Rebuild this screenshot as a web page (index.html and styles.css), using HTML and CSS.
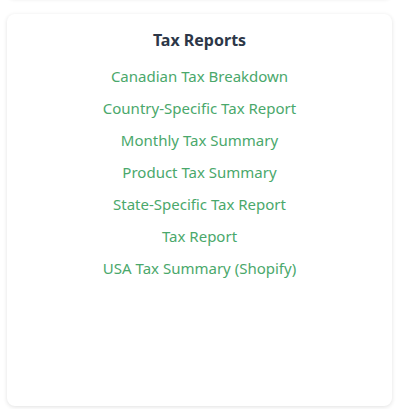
FILE: index.html
```html
<!doctype html>
<html>

<head>
	<title>Tax Reports</title>
	<link rel="stylesheet" href="styles.css">
</head>

<body>
	<div class="card card-prev"></div>
	<div class="card report-card">
		<div class="card-title">Tax Reports</div>
		<ul class="report-list">
			<li><a href="#">Canadian Tax Breakdown</a></li>
			<li><a href="#">Country-Specific Tax Report</a></li>
			<li><a href="#">Monthly Tax Summary</a></li>
			<li><a href="#">Product Tax Summary</a></li>
			<li><a href="#">State-Specific Tax Report</a></li>
			<li><a href="#">Tax Report</a></li>
			<li><a href="#">USA Tax Summary (Shopify)</a></li>
		</ul>
	</div>
</body>

</html>
```

FILE: styles.css
```css
* { margin: 0; padding: 0; box-sizing: border-box; }
body { background-color: #fff; font-family: 'Noto Sans', 'Open Sans', sans-serif; font-size: 16px; padding: 0 8px 0 7px; display: flex; flex-direction: column; gap: 16px; height: 409px; overflow: hidden; }
.card { background-color: #fff; border-radius: 8px; box-shadow: 0 1px 4px rgba(0, 0, 0, 0.12); flex-shrink: 0; }
.card-prev { height: 40px; margin-top: -42px; }
.report-card { height: 392px; padding-top: 14px; text-align: center; }
.card-title { font-weight: bold; color: #2d3748; font-size: 16px; line-height: 24px; margin-bottom: 12px; }
.report-list { list-style: none; display: flex; flex-direction: column; gap: 8px; }
.report-list a { color: #4aa86b; text-decoration: none; line-height: 24px; font-size: 15px; }
```
